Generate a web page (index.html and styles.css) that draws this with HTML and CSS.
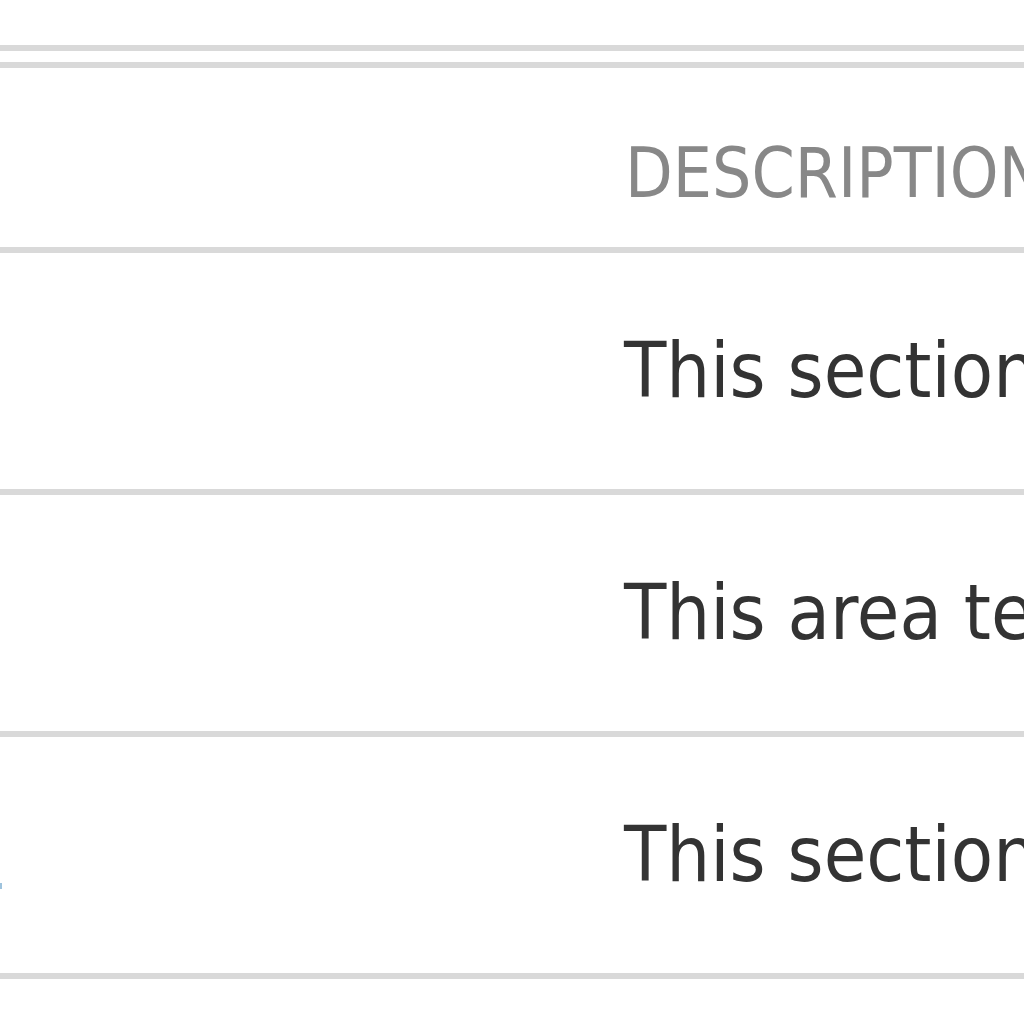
FILE: index.html
```html
<!DOCTYPE html>
<html>
<head>
<meta charset="utf-8">
<link rel="stylesheet" href="styles.css">
</head>
<body>
<div class="page">
  <div class="top-rule"></div>
  <div class="table">
    <div class="row head">
      <div class="cell name"></div>
      <div class="cell desc">DESCRIPTION</div>
    </div>
    <div class="row">
      <div class="cell name"></div>
      <div class="cell desc">This section describes the settings</div>
    </div>
    <div class="row">
      <div class="cell name"></div>
      <div class="cell desc">This area tells you more</div>
    </div>
    <div class="row">
      <div class="cell name"><span class="cut"><a href="#" class="link">Reference</a></span></div>
      <div class="cell desc">This section explains the options</div>
    </div>
  </div>
</div>
</body>
</html>
```

FILE: styles.css
```css
html, body {
  margin: 0;
  padding: 0;
  background: #ffffff;
  overflow: hidden;
}

.page {
  width: 1024px;
  height: 1024px;
  overflow: hidden;
  padding-top: 45px;
  box-sizing: border-box;
  font-family: "DejaVu Sans Condensed", "DejaVu Sans", sans-serif;
}

.top-rule {
  height: 6px;
  background: #d9d9d9;
  margin-bottom: 11px;
}

.table {
  border-top: 6px solid #d9d9d9;
}

.row {
  display: flex;
  height: 236px;
  border-bottom: 6px solid #d9d9d9;
  align-items: center;
}

.row.head {
  height: 179px;
  align-items: flex-end;
}

.cell {
  white-space: nowrap;
}

.name {
  width: 624px;
  flex: 0 0 624px;
  display: flex;
}

.desc {
  font-size: 77px;
  color: #333333;
  line-height: 1.164;
}

.head .desc {
  font-size: 69px;
  color: #888888;
  padding-bottom: 34px;
  padding-left: 1px;
}

.cut {
  width: 2px;
  direction: rtl;
  white-space: nowrap;
  font-size: 77px;
  line-height: 1.164;
  padding-top: 2px;
}

.link {
  color: #8cc4e6;
  text-decoration: underline;
  text-decoration-color: #9ec3dd;
  text-decoration-thickness: 6px;
  text-underline-offset: 1px;
}
```
